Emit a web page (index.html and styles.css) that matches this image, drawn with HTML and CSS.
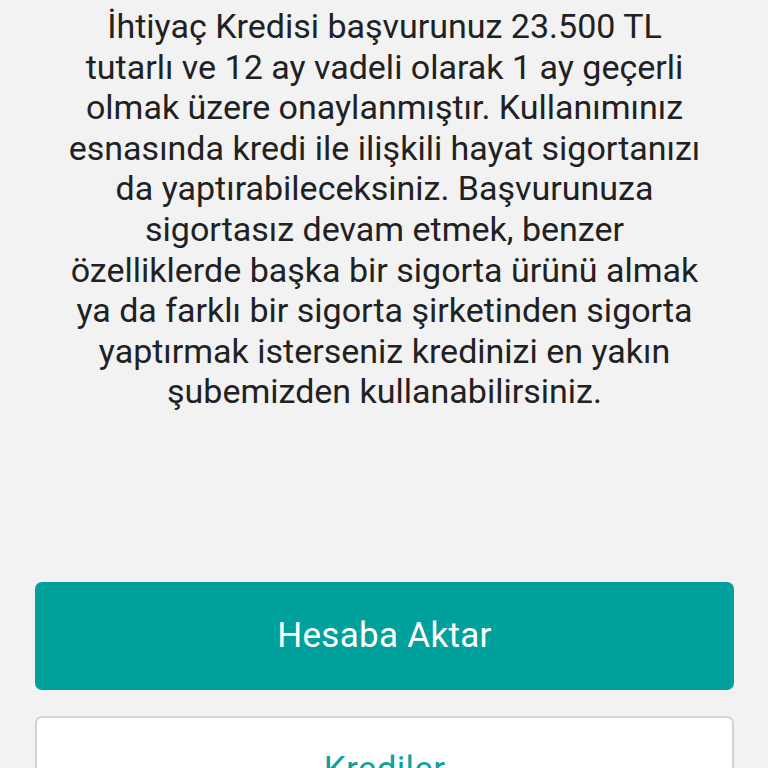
FILE: index.html
```html
<!DOCTYPE html>
<html lang="tr">
<head>
<meta charset="utf-8">
<link rel="stylesheet" href="styles.css">
</head>
<body>
<div class="page">
  <p class="message">İhtiyaç Kredisi başvurunuz 23.500 TL<br>tutarlı ve 12 ay vadeli olarak 1 ay geçerli<br>olmak üzere onaylanmıştır. Kullanımınız<br>esnasında kredi ile ilişkili hayat sigortanızı<br>da yaptırabileceksiniz. Başvurunuza<br>sigortasız devam etmek, benzer<br>özelliklerde başka bir sigorta ürünü almak<br>ya da farklı bir sigorta şirketinden sigorta<br>yaptırmak isterseniz kredinizi en yakın<br>şubemizden kullanabilirsiniz.</p>
  <div class="actions">
    <button class="btn btn-primary">Hesaba Aktar</button>
    <button class="btn btn-secondary">Krediler</button>
  </div>
</div>
</body>
</html>
```
FILE: styles.css
```css
html, body {
  margin: 0;
  padding: 0;
  background: #f2f2f3;
  overflow: hidden;
  height: 768px;
}
.page {
  font-family: Roboto, "Noto Sans", sans-serif;
  padding: 6px 34px 0 35px;
}
.message {
  margin: 0 -30px;
  text-align: center;
  color: #212121;
  font-size: 34px;
  line-height: 40.6px;
  white-space: nowrap;
}
.actions {
  margin-top: 170px;
  display: flex;
  flex-direction: column;
  gap: 26px;
}
.btn {
  display: block;
  width: 100%;
  height: 108px;
  border-radius: 7px;
  font-family: Roboto, "Noto Sans", sans-serif;
  font-size: 35px;
  letter-spacing: 0.3px;
  padding: 0;
}
.btn-primary {
  background: #00a19d;
  color: #ffffff;
  border: none;
}
.btn-secondary {
  background: #ffffff;
  color: #13a099;
  border: 2px solid #d4d4d6;
}
```
